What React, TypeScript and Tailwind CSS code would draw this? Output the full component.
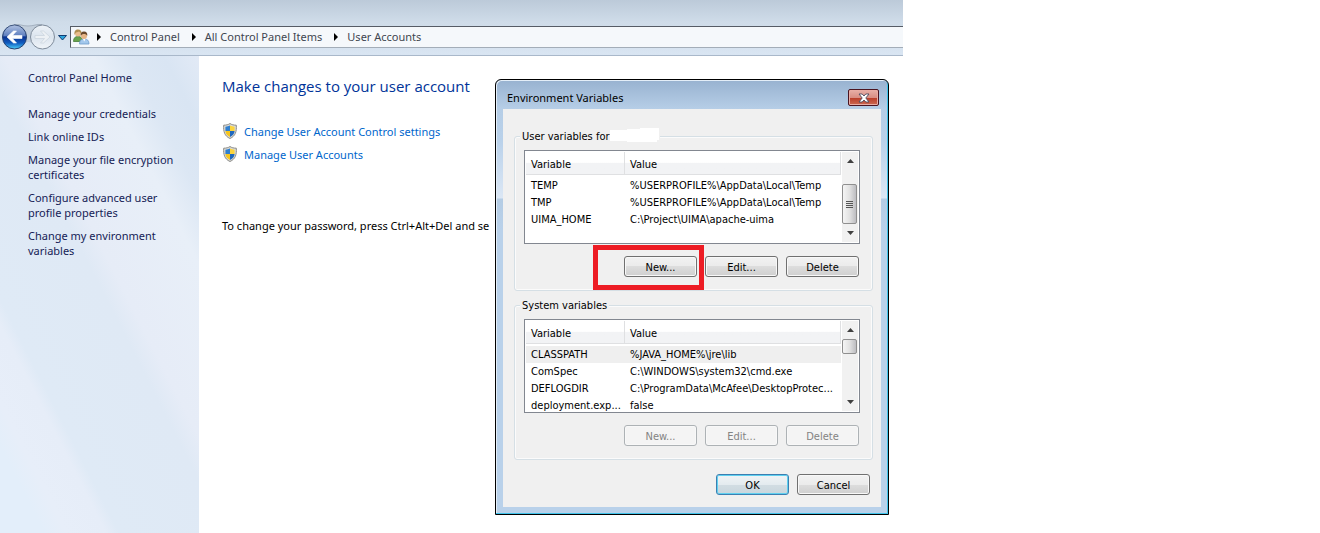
import * as React from 'react';

type Variable = {
  name: string;
  value: string;
};

const userVariables: Variable[] = [
  { name: 'TEMP', value: '%USERPROFILE%\\AppData\\Local\\Temp' },
  { name: 'TMP', value: '%USERPROFILE%\\AppData\\Local\\Temp' },
  { name: 'UIMA_HOME', value: 'C:\\Project\\UIMA\\apache-uima' },
];

const systemVariables: Variable[] = [
  { name: 'CLASSPATH', value: '%JAVA_HOME%\\jre\\lib' },
  { name: 'ComSpec', value: 'C:\\WINDOWS\\system32\\cmd.exe' },
  { name: 'DEFLOGDIR', value: 'C:\\ProgramData\\McAfee\\DesktopProtec...' },
  { name: 'deployment.exp...', value: 'false' },
];

const sidebarLinks = [
  'Manage your credentials',
  'Link online IDs',
  'Manage your file encryption certificates',
  'Configure advanced user profile properties',
  'Change my environment variables',
];

const breadcrumbs = ['Control Panel', 'All Control Panel Items', 'User Accounts'];

const NavButtons = () => (
  <div className="relative flex h-7 w-[70px] shrink-0 items-center">
    <svg className="absolute inset-0" width="70" height="28" viewBox="0 0 70 28" aria-hidden="true">
      <defs>
        <linearGradient id="back" x1="0" y1="0" x2="0" y2="1">
          <stop offset="0" stopColor="#9fb4dc" />
          <stop offset="0.46" stopColor="#3a62b0" />
          <stop offset="0.5" stopColor="#0b3290" />
          <stop offset="0.75" stopColor="#0f5cc0" />
          <stop offset="1" stopColor="#4fd0fa" />
        </linearGradient>
        <linearGradient id="forward" x1="0" y1="0" x2="0" y2="1">
          <stop offset="0" stopColor="#eef3f8" />
          <stop offset="0.5" stopColor="#dbe4ee" />
          <stop offset="1" stopColor="#f1f5f9" />
        </linearGradient>
      </defs>
      <path d="M14 1.500C20 1 22 3 28 3S36 1 42 1.500V23C36 23 34 19 28 19S20 23 14 23z" fill="#c3cfdc" />
      <path d="M14 1.500C20 1 22 3 28 3S36 1 42 1.500" fill="none" stroke="#a3b0bf" />
      <circle cx="14.500" cy="14" r="12" fill="url(#back)" stroke="#26406f" />
      <path d="M3.500 13a11 11 0 0 1 22 0z" fill="#fff" opacity="0.180" />
      <path d="M7 14l6.500-6h3l-4 4.500H22v3h-9.500l4 4.500h-3z" fill="#fff" stroke="#fff" strokeWidth="0.600" />
      <circle cx="42.500" cy="14" r="12" fill="url(#forward)" stroke="#7e8b9b" />
      <path d="M50 14l-6.500-6h-3l4 4.500H35v3h9.500l-4 4.500h3z" fill="#edf1f5" stroke="#c9d2dc" strokeWidth="0.700" />
      <path d="M58.500 12.500h8l-4 4.500z" fill="#2aa3dc" stroke="#123c72" />
    </svg>
    <button type="button" aria-label="Back" className="relative ml-0.5 h-6 w-6 rounded-full" />
    <button type="button" aria-label="Forward" className="relative ml-1 h-6 w-6 rounded-full" />
    <button type="button" aria-label="Recent pages" className="relative ml-1 h-4 w-3" />
  </div>
);

const UsersIcon = () => (
  <svg width="17" height="16" viewBox="0 0 17 16" aria-hidden="true">
    <path d="M0.500 12.500c0-3.500 1.500-5 4.500-5s4.500 1.500 4.500 5z" fill="#68a44c" stroke="#477c38" strokeWidth="0.800" />
    <circle cx="5" cy="4.500" r="3" fill="#e9bd8c" />
    <path d="M1.500 6C1 2 2.500.5 5 .5S9 2 8.500 5C7.500 4.500 7 3 6 2.500 4.500 3.500 3 3 2.500 4z" fill="#b08f50" />
    <path d="M6.500 15c0-3.500 1.500-5 4.700-5s4.800 1.500 4.800 5z" fill="#a3c8ec" stroke="#6f9ccd" strokeWidth="0.800" />
    <circle cx="11" cy="7" r="3" fill="#e6b586" />
    <path d="M7.800 7C7.200 4 8.500 2.500 11 2.500S14.800 4 14.200 7C13.500 5.500 12.500 5 11 5s-2.500.5-3.200 2z" fill="#6a4a2c" />
    <path d="M10 10l1.200 2.500L12.500 10z" fill="#fff" />
  </svg>
);

const ShieldIcon = () => (
  <svg width="16" height="16" viewBox="-1 0 16 16" aria-hidden="true" className="shrink-0">
    <path
      d="M7 .5C5.500 1.700 3 2.200.7 2.200.3 8.500 1.500 13 7 15.500 12.500 13 13.700 8.500 13.300 2.200 11 2.200 8.500 1.700 7 .5z"
      fill="#dcdcd8"
      stroke="#8b8b87"
    />
    <path d="M7 2.500C5.700 3.200 4 3.600 2.400 3.700V8H7z" fill="#2f7fd0" />
    <path d="M7 2.500C8.300 3.200 10 3.600 11.600 3.700V8H7z" fill="#fbd43c" />
    <path d="M2.400 8C2.700 10.800 4 12.600 7 13.900V8z" fill="#f6c51f" />
    <path d="M11.600 8C11.300 10.800 10 12.600 7 13.900V8z" fill="#1f68bd" />
  </svg>
);

const Explorer = () => (
  <div className="mr-[417px] flex min-h-screen flex-col font-['Noto_Sans','Open_Sans',sans-serif] text-[11px] leading-[15px]">
    <header className="border-b border-[#a9b8ca] bg-linear-to-b from-[#bccad9] via-[#cfdce9] via-40% to-[#d9e5f2] pt-[23px]">
      <nav aria-label="Address" className="flex h-8 items-start">
        <NavButtons />
        <div className="mt-[3px] flex h-[22px] flex-1 items-center border border-r-0 border-[#a3adb8] border-t-[#565c66] border-l-[#565c66] bg-[#f5f8fb] pb-px pl-0.5 text-[#3f4650]">
          <UsersIcon />
          {breadcrumbs.map((crumb) => (
            <React.Fragment key={crumb}>
              <svg width="5" height="8" viewBox="0 0 5 8" aria-hidden="true" className="mr-2 ml-[7px]">
                <path d="M0 0v8L4 4z" fill="#000" />
              </svg>
              <a href="#" className="mr-[5px] whitespace-nowrap">
                {crumb}
              </a>
            </React.Fragment>
          ))}
        </div>
      </nav>
    </header>
    <div className="flex flex-1">
      <aside className="w-[199px] shrink-0 bg-[linear-gradient(63deg,#e3eefa_0%,#e3eefa_10%,#e7eef9_15%,#e6edf8_24%,#dfeaf6_27%,#dfe9f5_51%,#e6ecf7_56%,#e8eff8_76%,#dce7f4_84%,#d9e5f3_92%,#e2eaf6_100%)] pr-3 pl-7 text-[#151c55]">
        <a href="#" className="mt-[14px] block">
          Control Panel Home
        </a>
        <ul className="mt-[21px] flex flex-col gap-2">
          {sidebarLinks.map((link) => (
            <li key={link}>
              <a href="#">{link}</a>
            </li>
          ))}
        </ul>
      </aside>
      <main className="min-w-0 flex-1 bg-white pl-[23px]">
        <h1 className="mt-[19px] font-['Open_Sans',sans-serif] text-[15px] leading-[22px] text-[#003399]">
          Make changes to your user account
        </h1>
        <ul className="mt-[26px] flex flex-col gap-[7px] text-[#0066cc]">
          <li className="flex items-center gap-1.5">
            <ShieldIcon />
            <a href="#">Change User Account Control settings</a>
          </li>
          <li className="flex items-center gap-1.5">
            <ShieldIcon />
            <a href="#">Manage User Accounts</a>
          </li>
        </ul>
        <p className="mt-14 whitespace-nowrap text-black">To change your password, press Ctrl+Alt+Del and se</p>
      </main>
    </div>
  </div>
);

type DialogButtonProps = React.ButtonHTMLAttributes<HTMLButtonElement> & {
  primary?: boolean;
};

const DialogButton = ({ primary, ...props }: DialogButtonProps) => (
  <button
    type="button"
    className={`h-[21px] w-[73px] rounded-[3px] border pt-px ${
      primary
        ? 'border-[#3c7fb1] bg-[linear-gradient(180deg,#f0f4f6,#e4ebef_50%,#d2dde3_50%,#c9d6dd)] shadow-[inset_0_0_0_1px_#5fd0f0]'
        : 'border-[#707070] bg-[linear-gradient(180deg,#f2f2f2,#ebebeb_50%,#dddddd_50%,#cfcfcf)] shadow-[inset_0_0_0_1px_#f8f8f8] disabled:border-[#adb2b5] disabled:bg-[#f4f4f4] disabled:bg-none disabled:text-[#838383]'
    }`}
    {...props}
  />
);

const ScrollBar = ({ thumbClass, grip }: { thumbClass: string; grip?: boolean }) => (
  <div aria-hidden="true" className="relative ml-px flex w-4 shrink-0 flex-col items-center justify-between bg-[#f1f1f1] py-[7px]">
    <svg width="7" height="4" viewBox="0 0 7 4">
      <path d="M3.500 0L7 4H0z" fill="#404040" />
    </svg>
    <svg width="7" height="4" viewBox="0 0 7 4">
      <path d="M3.500 4L7 0H0z" fill="#404040" />
    </svg>
    <div
      className={`absolute left-0 flex w-[15px] flex-col items-center justify-center gap-px rounded-[2px] border border-[#8f8f8f] bg-linear-to-r from-[#f5f5f5] via-[#e2e2e2] to-[#bdbdc1] ${thumbClass}`}
    >
      {grip && (
        <>
          <span className="h-px w-[7px] bg-[#555]" />
          <span className="h-px w-[7px] bg-[#555]" />
          <span className="h-px w-[7px] bg-[#555]" />
          <span className="h-px w-[7px] bg-[#555]" />
        </>
      )}
    </div>
  </div>
);

type VariableTableProps = {
  data: Variable[];
  label: string;
  selected?: string;
  children: React.ReactNode;
};

const VariableTable = ({ data, label, selected, children }: VariableTableProps) => (
  <div className="flex h-[94px] overflow-hidden border border-[#828790] bg-white p-px">
    <div className="min-w-0 flex-1">
      <table aria-label={label} className="w-full table-fixed border-separate border-spacing-0 text-left">
        <thead>
          <tr className="h-[23px] bg-linear-to-b from-white from-45% to-[#f2f3f5] to-50%">
            <th className="w-[99px] border-r border-b border-[#dfe0e2] pt-0.5 pb-0 pl-[5px] font-normal">Variable</th>
            <th className="border-r border-b border-[#dfe0e2] pt-0.5 pb-0 pl-[5px] font-normal">Value</th>
          </tr>
        </thead>
        <tbody>
          <tr className="h-0.5" aria-hidden="true">
            <td colSpan={2} className="p-0" />
          </tr>
          {data.map(({ name, value }) => (
            <tr key={name} className={name === selected ? 'h-[17px] bg-[#efefef]' : 'h-[17px]'}>
              <td className="py-0 pl-[5px] whitespace-nowrap">{name}</td>
              <td className="py-0 pl-[5px] whitespace-nowrap">{value}</td>
            </tr>
          ))}
        </tbody>
      </table>
    </div>
    {children}
  </div>
);

const EnvironmentDialog = () => (
  <div
    role="dialog"
    aria-labelledby="dialog-title"
    className="absolute top-[79px] left-[495px] w-[394px] rounded-t-[6px] border border-black bg-[#b9d1ea] bg-[linear-gradient(180deg,#98b2d0_0px,#b5cde6_28px,#b9d1ea_60px,#dbe7f5_118px,#b4cce4_119px,#b9d1ea_150px)] px-[7px] pb-[7px] font-['DejaVu_Sans_Condensed','DejaVu_Sans',sans-serif] text-[11px] leading-[15px] text-black shadow-[inset_-1px_-1px_0_#3fc3ea,inset_1px_1px_0_#e4eef8]"
  >
    <div className="flex h-[29px] items-center justify-between pt-1.5 pr-0.5 pl-1">
      <h2 id="dialog-title" className="font-['Noto_Sans','Open_Sans',sans-serif]">
        Environment Variables
      </h2>
      <button
        type="button"
        aria-label="Close"
        className="flex h-[17px] w-[31px] items-center justify-center rounded-[2px] border border-[#4a1420] bg-[linear-gradient(180deg,#e8b0a8,#d98e84_50%,#b93a27_50%,#cc6a52)] shadow-[inset_0_0_0_1px_#e9aca4]"
      >
        <svg width="12" height="10" viewBox="0 0 12 10" aria-hidden="true">
          <path d="M1 1h3.200L6 3l1.800-2H11L7.800 5 11 9H7.800L6 7 4.200 9H1l3.200-4z" fill="#fff" stroke="#4b4a5e" strokeWidth="0.900" />
        </svg>
      </button>
    </div>
    <div className="bg-[#f0f0f0] pt-[19px] pr-2 pb-3 pl-[11px]">
      <fieldset className="rounded-[3px] border border-[#d5dfe5] pr-3 pb-[13px] pl-[9px] shadow-[inset_0_0_0_1px_#fbfbfb]">
        <legend className="-ml-1 flex h-4 items-center bg-[#f0f0f0] pl-0.5">
          User variables for
          <svg width="50" height="16" viewBox="0 0 50 16" aria-hidden="true">
            <path d="M0 2h17V1h13V0h19v12h-2v2H17v-1H0z" fill="#fff" />
          </svg>
        </legend>
        <div className="mt-1.5">
          <VariableTable label="User variables" data={userVariables}>
            <ScrollBar thumbClass="top-8 h-10" grip />
          </VariableTable>
        </div>
        <div className="relative mt-3 flex justify-end gap-2 pr-px">
          <DialogButton>New...</DialogButton>
          <DialogButton>Edit...</DialogButton>
          <DialogButton>Delete</DialogButton>
          <div className="pointer-events-none absolute -top-[11px] right-[156px] h-[45px] w-[111px] border-[5px] border-[#ed1c24]" />
        </div>
      </fieldset>
      <fieldset className="mt-1.5 rounded-[3px] border border-[#d5dfe5] pr-3 pb-[13px] pl-[9px] shadow-[inset_0_0_0_1px_#fbfbfb]">
        <legend className="-ml-1 flex h-4 items-center bg-[#f0f0f0] px-0.5">System variables</legend>
        <div className="mt-1.5">
          <VariableTable label="System variables" data={systemVariables} selected="CLASSPATH">
            <ScrollBar thumbClass="top-[18px] h-[15px]" />
          </VariableTable>
        </div>
        <div className="mt-3 flex justify-end gap-2 pr-px">
          <DialogButton disabled>New...</DialogButton>
          <DialogButton disabled>Edit...</DialogButton>
          <DialogButton disabled>Delete</DialogButton>
        </div>
      </fieldset>
      <div className="mt-[14px] flex justify-end gap-2 pr-[3px]">
        <DialogButton primary>OK</DialogButton>
        <DialogButton>Cancel</DialogButton>
      </div>
    </div>
  </div>
);

export default function App() {
  return (
    <div className="relative min-h-screen overflow-hidden bg-white">
      <Explorer />
      <EnvironmentDialog />
    </div>
  );
}
